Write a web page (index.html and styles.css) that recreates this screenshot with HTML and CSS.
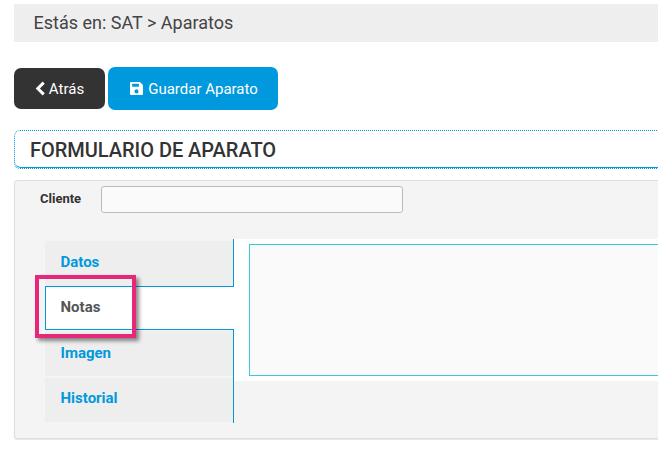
FILE: index.html
```html
<!DOCTYPE html>
<html lang="es">
<head>
<meta charset="utf-8">
<title>Formulario de aparato</title>
<link rel="stylesheet" href="styles.css">
</head>
<body>
<div class="page">
  <div class="crumb">Estás en: SAT &gt; Aparatos</div>
  <div class="actions">
    <button class="btn back" type="button">
      <svg class="chev" viewBox="0 0 10 14" width="11" height="15"><path d="M8 1.5 2.5 7 8 12.5" fill="none" stroke="#fff" stroke-width="2.8"/></svg>
      Atrás
    </button>
    <button class="btn save" type="button">
      <svg class="disk" viewBox="0 0 12 12" width="13" height="13"><path fill-rule="evenodd" d="M1 0h8.2L12 2.8V11a1 1 0 0 1-1 1H1a1 1 0 0 1-1-1V1a1 1 0 0 1 1-1zM2 1.5V4.4h6.2V1.5zM6 6.8a1.9 1.9 0 1 0 0 3.8 1.9 1.9 0 0 0 0-3.8z" fill="#fff"/></svg>
      Guardar Aparato
    </button>
  </div>
  <h1 class="title"><span class="title-inner">FORMULARIO DE APARATO</span></h1>
  <section class="panel">
    <div class="field">
      <label class="label" for="cliente">Cliente</label>
      <input class="input" id="cliente" type="text">
    </div>
    <div class="tabset">
      <ul class="tabs">
        <li class="tab">Datos</li>
        <li class="tab active">Notas<span class="mark"></span></li>
        <li class="tab">Imagen</li>
        <li class="tab">Historial</li>
      </ul>
      <div class="pane-col">
        <div class="pane"><div class="editor"></div></div>
      </div>
    </div>
  </section>
</div>
</body>
</html>
```
FILE: styles.css
```css
* { box-sizing: border-box; }
html, body { margin: 0; padding: 0; background: #fff; overflow: hidden; }
body { width: 658px; height: 456px; font-family: Roboto, "Liberation Sans", sans-serif; color: #333; }
.page { width: 720px; padding: 4px 0 0 14px; }

.crumb { height: 38px; line-height: 37px; padding-left: 19.5px; background: #eee; font-size: 18px; color: #444; }

.actions { display: flex; align-items: center; gap: 3px; margin-top: 25px; height: 43px; }
.btn { border: 0; color: #fff; font-family: inherit; font-size: 15px; font-weight: 400; display: flex; align-items: center; justify-content: center; padding: 0; }
.back { width: 91px; height: 41px; background: #333; border-radius: 7px; gap: 3px; }
.save { width: 170px; height: 43px; background: #0099dd; border-radius: 7px; gap: 5px; padding-left: 2px; }
.chev { display: block; }
.disk { display: block; }

.title { margin: 20px 0 0; height: 39px; border: 1px dotted #0099dd; border-radius: 6px 0 0 6px; font-size: 20px; font-weight: 500; color: #333; }
.title-inner { display: block; height: 37px; line-height: 38px; padding-left: 15px; border-bottom: 1px solid #0099dd; border-radius: 6px 0 0 6px; letter-spacing: -0.03px; }

.panel { margin-top: 11px; height: 259px; background: #f4f4f4; border: 1px solid #ddd; border-radius: 3px 0 0 3px; box-shadow: 0 1px 1px #e6e6e6; padding: 5px 0 0 25px; }
.field { display: flex; align-items: center; height: 27px; }
.label { width: 61px; font-size: 13px; font-weight: 700; color: #333; margin-top: -3px; }
.input { width: 302px; height: 27px; background: #fafafa; border: 1px solid #bbb; border-radius: 3px; padding: 0; }

.tabset { display: flex; margin: 26px 0 0 5px; }
.tabs { list-style: none; margin: 2px 0 0; padding: 0; width: 189px; display: flex; flex-direction: column; }
.tab { position: relative; height: 45px; padding-left: 15.5px; line-height: 42px; background: #eee; font-size: 15px; font-weight: 700; color: #0099dd; border-right: 1px solid #0099dd; }
.tab:nth-child(3) { margin-top: 1px; line-height: 44px; }
.tab:nth-child(4) { height: 44px; margin-top: 2px; line-height: 41px; }
.tab:first-child::before { content: ""; position: absolute; top: -2px; right: -1px; width: 1px; height: 2px; background: #0099dd; }
.tab:nth-child(3)::before { content: ""; position: absolute; top: -1px; right: -1px; width: 1px; height: 1px; background: #0099dd; }
.tab:nth-child(4)::before { content: ""; position: absolute; top: -2px; right: -1px; width: 1px; height: 2px; background: #0099dd; }
.tab:last-child::after { content: ""; position: absolute; bottom: -1px; right: -1px; width: 1px; height: 1px; background: #0099dd; }
.tab.active { z-index: 1; height: 44px; background: #fff; color: #555; border: 1px solid #0099dd; border-right: 0; line-height: 41px; padding-left: 14.5px; }

.mark { position: absolute; left: -11px; top: -12px; width: 101px; height: 63px; border: 4px solid #e6287a; box-shadow: 3px 3px 4px rgba(0,0,0,.45); }

.pane-col { flex: 1; }
.pane { height: 142px; background: #fff; padding: 5px 0 0 15px; }
.editor { height: 132px; background: #fafafa; border: 1px solid #3cc8dc; }
```
